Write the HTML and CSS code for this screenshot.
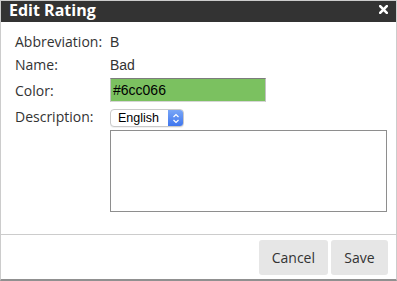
FILE: index.html
```html
<!DOCTYPE html>
<html>
<head>
<meta charset="utf-8">
<title>Edit Rating</title>
<link rel="stylesheet" href="styles.css">
</head>
<body>
<div class="dialog">
  <div class="header">
    <span class="title">Edit Rating</span>
    <span class="close" aria-label="Close">
      <svg width="9" height="9" viewBox="0 0 9 9"><path d="M1.2 1.2 L7.8 7.8 M7.8 1.2 L1.2 7.8" stroke="#fff" stroke-width="2.6" stroke-linecap="square"/></svg>
    </span>
  </div>
  <div class="content">
    <div class="row r1">
      <span class="label">Abbreviation:</span>
      <span class="value">B</span>
    </div>
    <div class="row r2">
      <span class="label">Name:</span>
      <span class="value">Bad</span>
    </div>
    <div class="row r3">
      <span class="label">Color:</span>
      <input class="color-input" type="text" value="#6cc066">
    </div>
    <div class="row r4">
      <span class="label">Description:</span>
      <div class="field">
        <div class="select">
          <span class="select-text">English</span>
          <span class="select-btn">
            <svg width="8" height="11" viewBox="0 0 8 11"><path d="M1.5 4 L4 1.5 L6.5 4 M1.5 7 L4 9.5 L6.5 7" fill="none" stroke="#fff" stroke-width="1.2"/></svg>
          </span>
        </div>
        <textarea class="desc"></textarea>
      </div>
    </div>
  </div>
  <div class="footer">
    <button class="btn">Cancel</button>
    <button class="btn save">Save</button>
  </div>
</div>
</body>
</html>
```

FILE: styles.css
```css
html, body {
  margin: 0;
  padding: 0;
  background: #fff;
}
.dialog {
  width: 397px;
  height: 281px;
  box-sizing: border-box;
  border: 1px solid #cccccc;
  border-bottom: 2px solid #909090;
  display: flex;
  flex-direction: column;
  font-family: "Open Sans", sans-serif;
  color: #333;
  background: #fff;
}
.header {
  height: 21px;
  background: #333333;
  display: flex;
  align-items: flex-start;
  justify-content: space-between;
  padding: 0 8px 0 8px;
  flex: none;
}
.title {
  color: #fff;
  font-weight: 700;
  font-size: 16px;
  line-height: 19px;
}
.close {
  display: flex;
  margin-top: 4px;
}
.content {
  flex: 1;
  padding: 10px 0 0 14px;
}
.row {
  display: flex;
  align-items: flex-start;
}
.label {
  width: 95px;
  flex: none;
  font-size: 14px;
  line-height: 20px;
  color: #333;
}
.value {
  font-family: "Liberation Sans", Arial, sans-serif;
  font-size: 14px;
  line-height: 20px;
  color: #333;
}
.r2 { margin-top: 3px; }
.r3 {
  margin-top: 3px;
  align-items: center;
  height: 24px;
}
.r3 .label { margin-top: 1px; }
.r4 { margin-top: 5px; }
.color-input {
  box-sizing: border-box;
  width: 156px;
  height: 24px;
  margin: 0;
  padding: 0 0 0 2px;
  border: 1px solid;
  border-color: #7c7c7c #c2c2c2 #d6d6d6 #c2c2c2;
  background: #7bc160;
  font-family: "Liberation Sans", Arial, sans-serif;
  font-size: 14px;
  color: #000;
  outline: none;
}
.field {
  display: flex;
  flex-direction: column;
  align-items: flex-start;
}
.select {
  margin-top: 2px;
  box-sizing: border-box;
  width: 74px;
  height: 18px;
  border: 1px solid #c9c9c9;
  border-radius: 4px;
  background: #fff;
  display: flex;
  align-items: stretch;
  overflow: hidden;
  box-shadow: 0 1px 0 rgba(0,0,0,0.05);
}
.select-text {
  flex: 1;
  font-family: "Liberation Sans", Arial, sans-serif;
  font-size: 12.5px;
  line-height: 16px;
  padding-left: 7px;
  color: #000;
}
.select-btn {
  width: 15px;
  background: linear-gradient(#79a6f7, #3f76ee);
  display: flex;
  align-items: center;
  justify-content: center;
}
.desc {
  margin: 3px 0 0 0;
  box-sizing: border-box;
  width: 277px;
  height: 82px;
  border: 1px solid #8e8e8e;
  padding: 2px;
  resize: none;
  outline: none;
  background: #fff;
}
.footer {
  flex: none;
  border-top: 1px solid #cccccc;
  display: flex;
  justify-content: flex-end;
  gap: 3px;
  padding: 5px 8px 0 0;
  height: 45px;
  box-sizing: border-box;
}
.btn {
  height: 35px;
  padding: 0 13px;
  margin: 0;
  border: none;
  border-radius: 3px;
  background: #e6e6e6;
  font-family: "Open Sans", sans-serif;
  font-size: 14px;
  color: #333;
}
.save {
  min-width: 57px;
}
```
